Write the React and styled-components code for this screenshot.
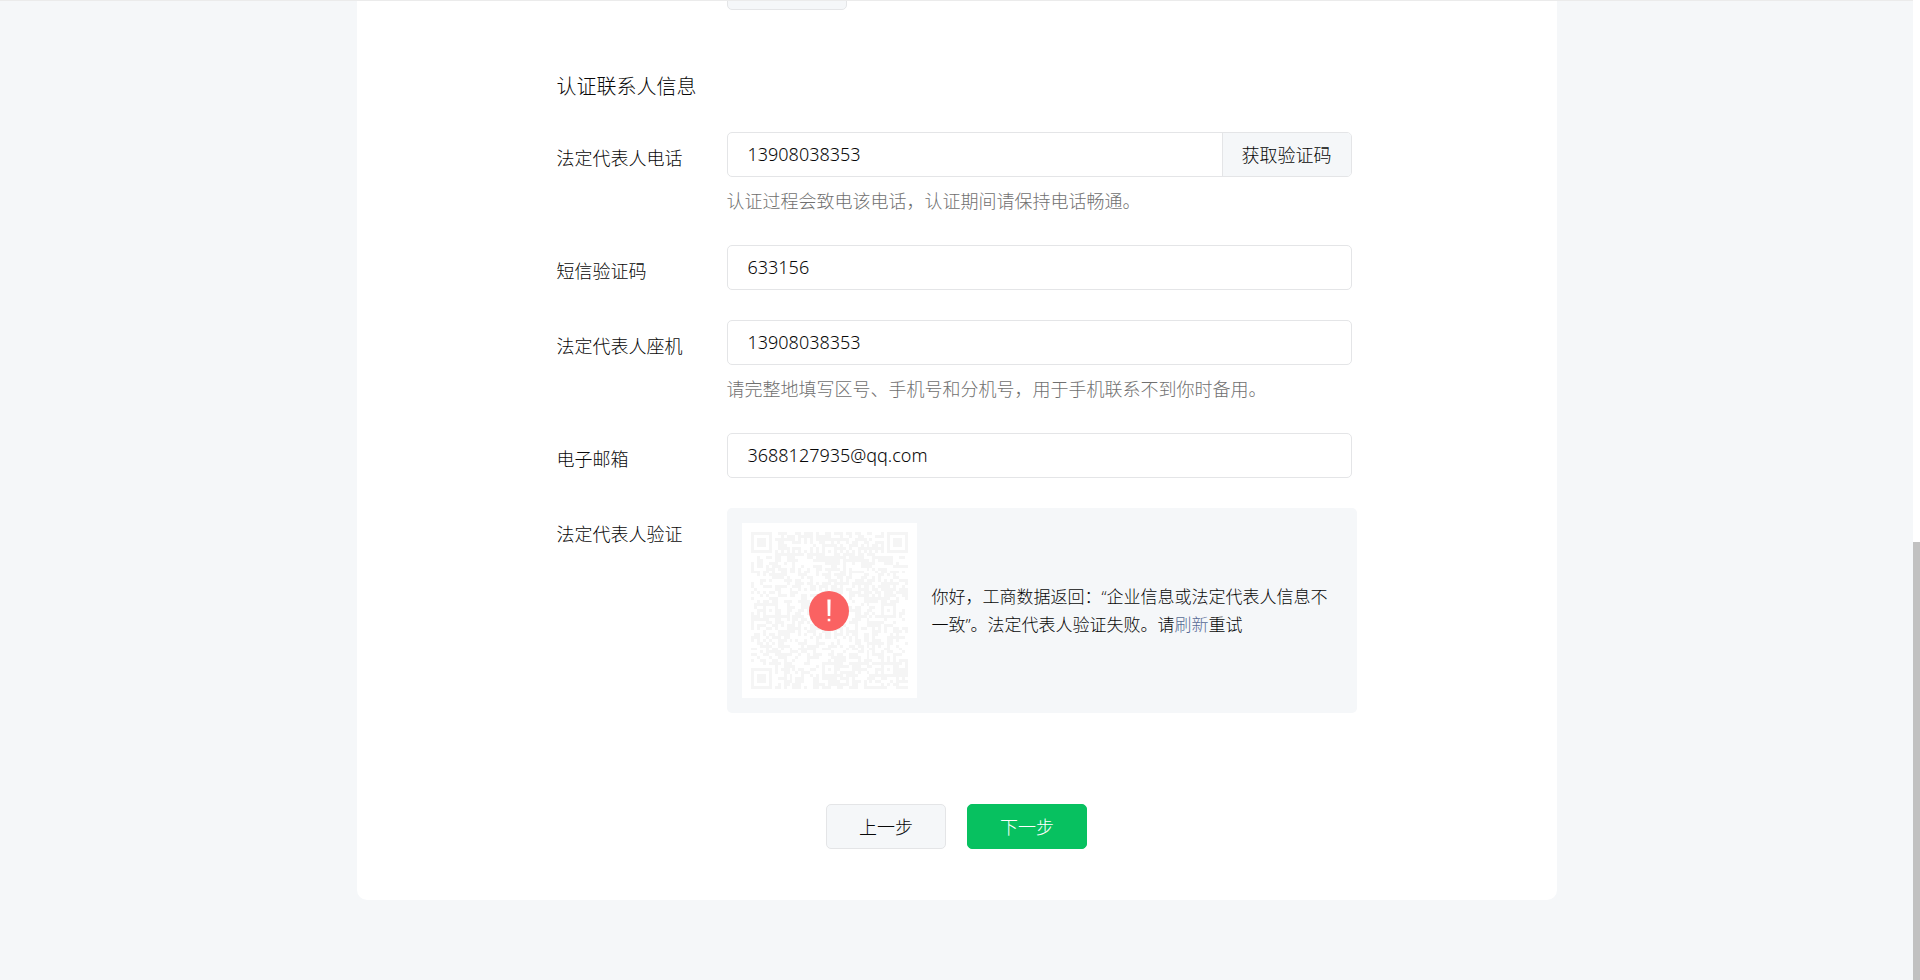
import React from "react";
import styled, { createGlobalStyle, css } from "styled-components";

const GlobalStyle = createGlobalStyle`
  *, *::before, *::after { box-sizing: border-box; }
  body {
    margin: 0;
    background: #f5f7f9;
    color: #080808;
    font-family: "Open Sans", "Noto Sans CJK SC", sans-serif;
    font-size: 18px;
    font-weight: 300;
  }
  button, input { font: inherit; color: inherit; }
`;

const Screen = styled.div`
  display: flex;
  min-height: 100vh;
`;

const Page = styled.main`
  flex: 1;
  min-width: 0;
  border-top: 1px solid #ebebeb;
  padding-bottom: 80px;
`;

const Card = styled.form`
  max-width: 1200px;
  margin: 0 auto;
  padding: 0 200px 51px;
  background: #fff;
  border-radius: 0 0 10px 10px;
`;

const ScrollRail = styled.div`
  width: 7px;
  flex: none;
  display: flex;
  flex-direction: column;
  justify-content: flex-end;
  background: #fff;
`;

const ScrollThumb = styled.div`
  height: 44.7%;
  background: #c1c1c1;
`;

const Button = styled.button`
  flex: none;
  width: 120px;
  height: 45px;
  padding: 0;
  border: 1px solid ${(p) => (p.$primary ? "#07c160" : "#e4e5e7")};
  border-radius: 5px;
  background: ${(p) => (p.$primary ? "#07c160" : "#f5f7f9")};
  color: ${(p) => (p.$primary ? "#fff" : "#080808")};
  line-height: 26px;
  cursor: pointer;
`;

const ScrolledRow = styled.div`
  display: flex;
  align-items: flex-end;
  height: 9px;
  padding-left: 170px;
  overflow: hidden;
`;

const SectionTitle = styled.h2`
  margin: 63px 0 31px;
  font-size: 20px;
  font-weight: 300;
  line-height: 28px;
`;

const Fields = styled.div`
  display: flex;
  flex-direction: column;
  gap: 30px;
`;

const Row = styled.div`
  display: flex;
  align-items: flex-start;
`;

const labelStyle = css`
  flex: none;
  width: 170px;
  padding-top: 13px;
  line-height: 26px;
`;
const Label = styled.label`${labelStyle}`;
const Caption = styled.span`${labelStyle}`;

const Control = styled.div`
  flex: 1;
  min-width: 0;
`;

const InputFrame = styled.div`
  display: flex;
  height: 45px;
  margin-right: 5px;
  border: 1px solid #e4e5e7;
  border-radius: 5px;
  overflow: hidden;
  background: #fff;
`;

const Input = styled.input`
  flex: 1;
  min-width: 0;
  padding: 0 20px 2px;
  border: 0;
  outline: 0;
  background: transparent;
  font-family: "Noto Sans", "Open Sans", sans-serif;
`;

const CodeButton = styled.button`
  flex: none;
  width: 129px;
  padding: 0 0 2px;
  border: 0;
  border-left: 1px solid #e4e5e7;
  background: #f5f7f9;
  cursor: pointer;
`;

const Hint = styled.p`
  margin: 11px 0 1px;
  line-height: 26px;
  color: #707070;
`;

const VerifyPanel = styled.div`
  display: flex;
  align-items: center;
  gap: 15px;
  padding: 15px;
  border-radius: 5px;
  background: #f5f7f9;
`;

const QrFrame = styled.div`
  flex: none;
  display: grid;
  place-items: center;
  width: 175px;
  height: 175px;
  background: #fff;

  > svg { grid-area: 1 / 1; }
`;

const Message = styled.p`
  margin: 0;
  font-size: 17px;
  line-height: 28px;
`;

const Link = styled.a`
  color: #576b95;
  text-decoration: none;
`;

const Actions = styled.div`
  display: flex;
  justify-content: center;
  gap: 21px;
  margin-top: 91px;
`;

const QR_SIZE = 53;

function ring(x, y, cx, cy) {
  return Math.max(Math.abs(x - cx), Math.abs(y - cy));
}

function buildQrPath() {
  const finders = [[3, 3], [QR_SIZE - 4, 3], [3, QR_SIZE - 4]];
  const alignments = [[26, 6], [6, 26], [26, 26], [46, 26], [26, 46], [46, 46]];
  let seed = 20873;
  const random = () => {
    seed = (seed * 1103515245 + 12345) % 2147483648;
    return seed / 2147483648;
  };
  const cells = [];
  let d = "";
  for (let y = 0; y < QR_SIZE; y += 1) {
    cells.push([]);
    for (let x = 0; x < QR_SIZE; x += 1) {
      const pick = random();
      let dark = random() < 0.5;
      if (pick < 0.1 && x > 0) dark = cells[y][x - 1];
      else if (pick > 0.9 && y > 0) dark = cells[y - 1][x];
      if (x === 6 || y === 6) dark = (x + y) % 2 === 0;
      alignments.forEach(([cx, cy]) => {
        const r = ring(x, y, cx, cy);
        if (r <= 2) dark = r !== 1;
      });
      finders.forEach(([cx, cy]) => {
        const r = ring(x, y, cx, cy);
        if (r <= 4) dark = r < 2 || r === 3;
      });
      cells[y].push(dark);
      if (dark) d += `M${x} ${y}h1v1h-1z`;
    }
  }
  return d;
}

const qrPath = buildQrPath();

function QrCode() {
  return (
    <QrFrame>
      <svg width="157" height="157" viewBox="0 0 53 53" shapeRendering="crispEdges" aria-hidden="true">
        <path d={qrPath} fill="#f5f5f5" />
      </svg>
      <svg width="40" height="40" viewBox="0 0 40 40" aria-hidden="true">
        <circle cx="20" cy="20" r="20" fill="#fa6262" />
        <path d="M18.4 8.4h3.2L21.3 25h-2.6zM18.7 27.7h2.6v2.5h-2.6z" fill="#fff" />
      </svg>
    </QrFrame>
  );
}

function Field({ id, label, value, type = "text", hint, action }) {
  return (
    <Row>
      <Label htmlFor={id}>{label}</Label>
      <Control>
        <InputFrame>
          <Input id={id} type={type} defaultValue={value} />
          {action && <CodeButton type="button">{action}</CodeButton>}
        </InputFrame>
        {hint && <Hint>{hint}</Hint>}
      </Control>
    </Row>
  );
}

export default function App() {
  return (
    <Screen>
      <GlobalStyle />
      <Page>
        <Card onSubmit={(e) => e.preventDefault()}>
          <ScrolledRow>
            <Button type="button" aria-label="上传" />
          </ScrolledRow>
          <SectionTitle>认证联系人信息</SectionTitle>
          <Fields>
            <Field
              id="phone"
              type="tel"
              label="法定代表人电话"
              value="13908038353"
              action="获取验证码"
              hint="认证过程会致电该电话，认证期间请保持电话畅通。"
            />
            <Field id="sms" label="短信验证码" value="633156" />
            <Field
              id="landline"
              type="tel"
              label="法定代表人座机"
              value="13908038353"
              hint="请完整地填写区号、手机号和分机号，用于手机联系不到你时备用。"
            />
            <Field id="email" type="email" label="电子邮箱" value="3688127935@qq.com" />
            <Row>
              <Caption>法定代表人验证</Caption>
              <Control>
                <VerifyPanel>
                  <QrCode />
                  <Message>
                    你好，工商数据返回：“企业信息或法定代表人信息不一致”。法定代表人验证失败。请<Link href="#refresh">刷新</Link>重试
                  </Message>
                </VerifyPanel>
              </Control>
            </Row>
          </Fields>
          <Actions>
            <Button type="button">上一步</Button>
            <Button type="submit" $primary>下一步</Button>
          </Actions>
        </Card>
      </Page>
      <ScrollRail>
        <ScrollThumb />
      </ScrollRail>
    </Screen>
  );
}
